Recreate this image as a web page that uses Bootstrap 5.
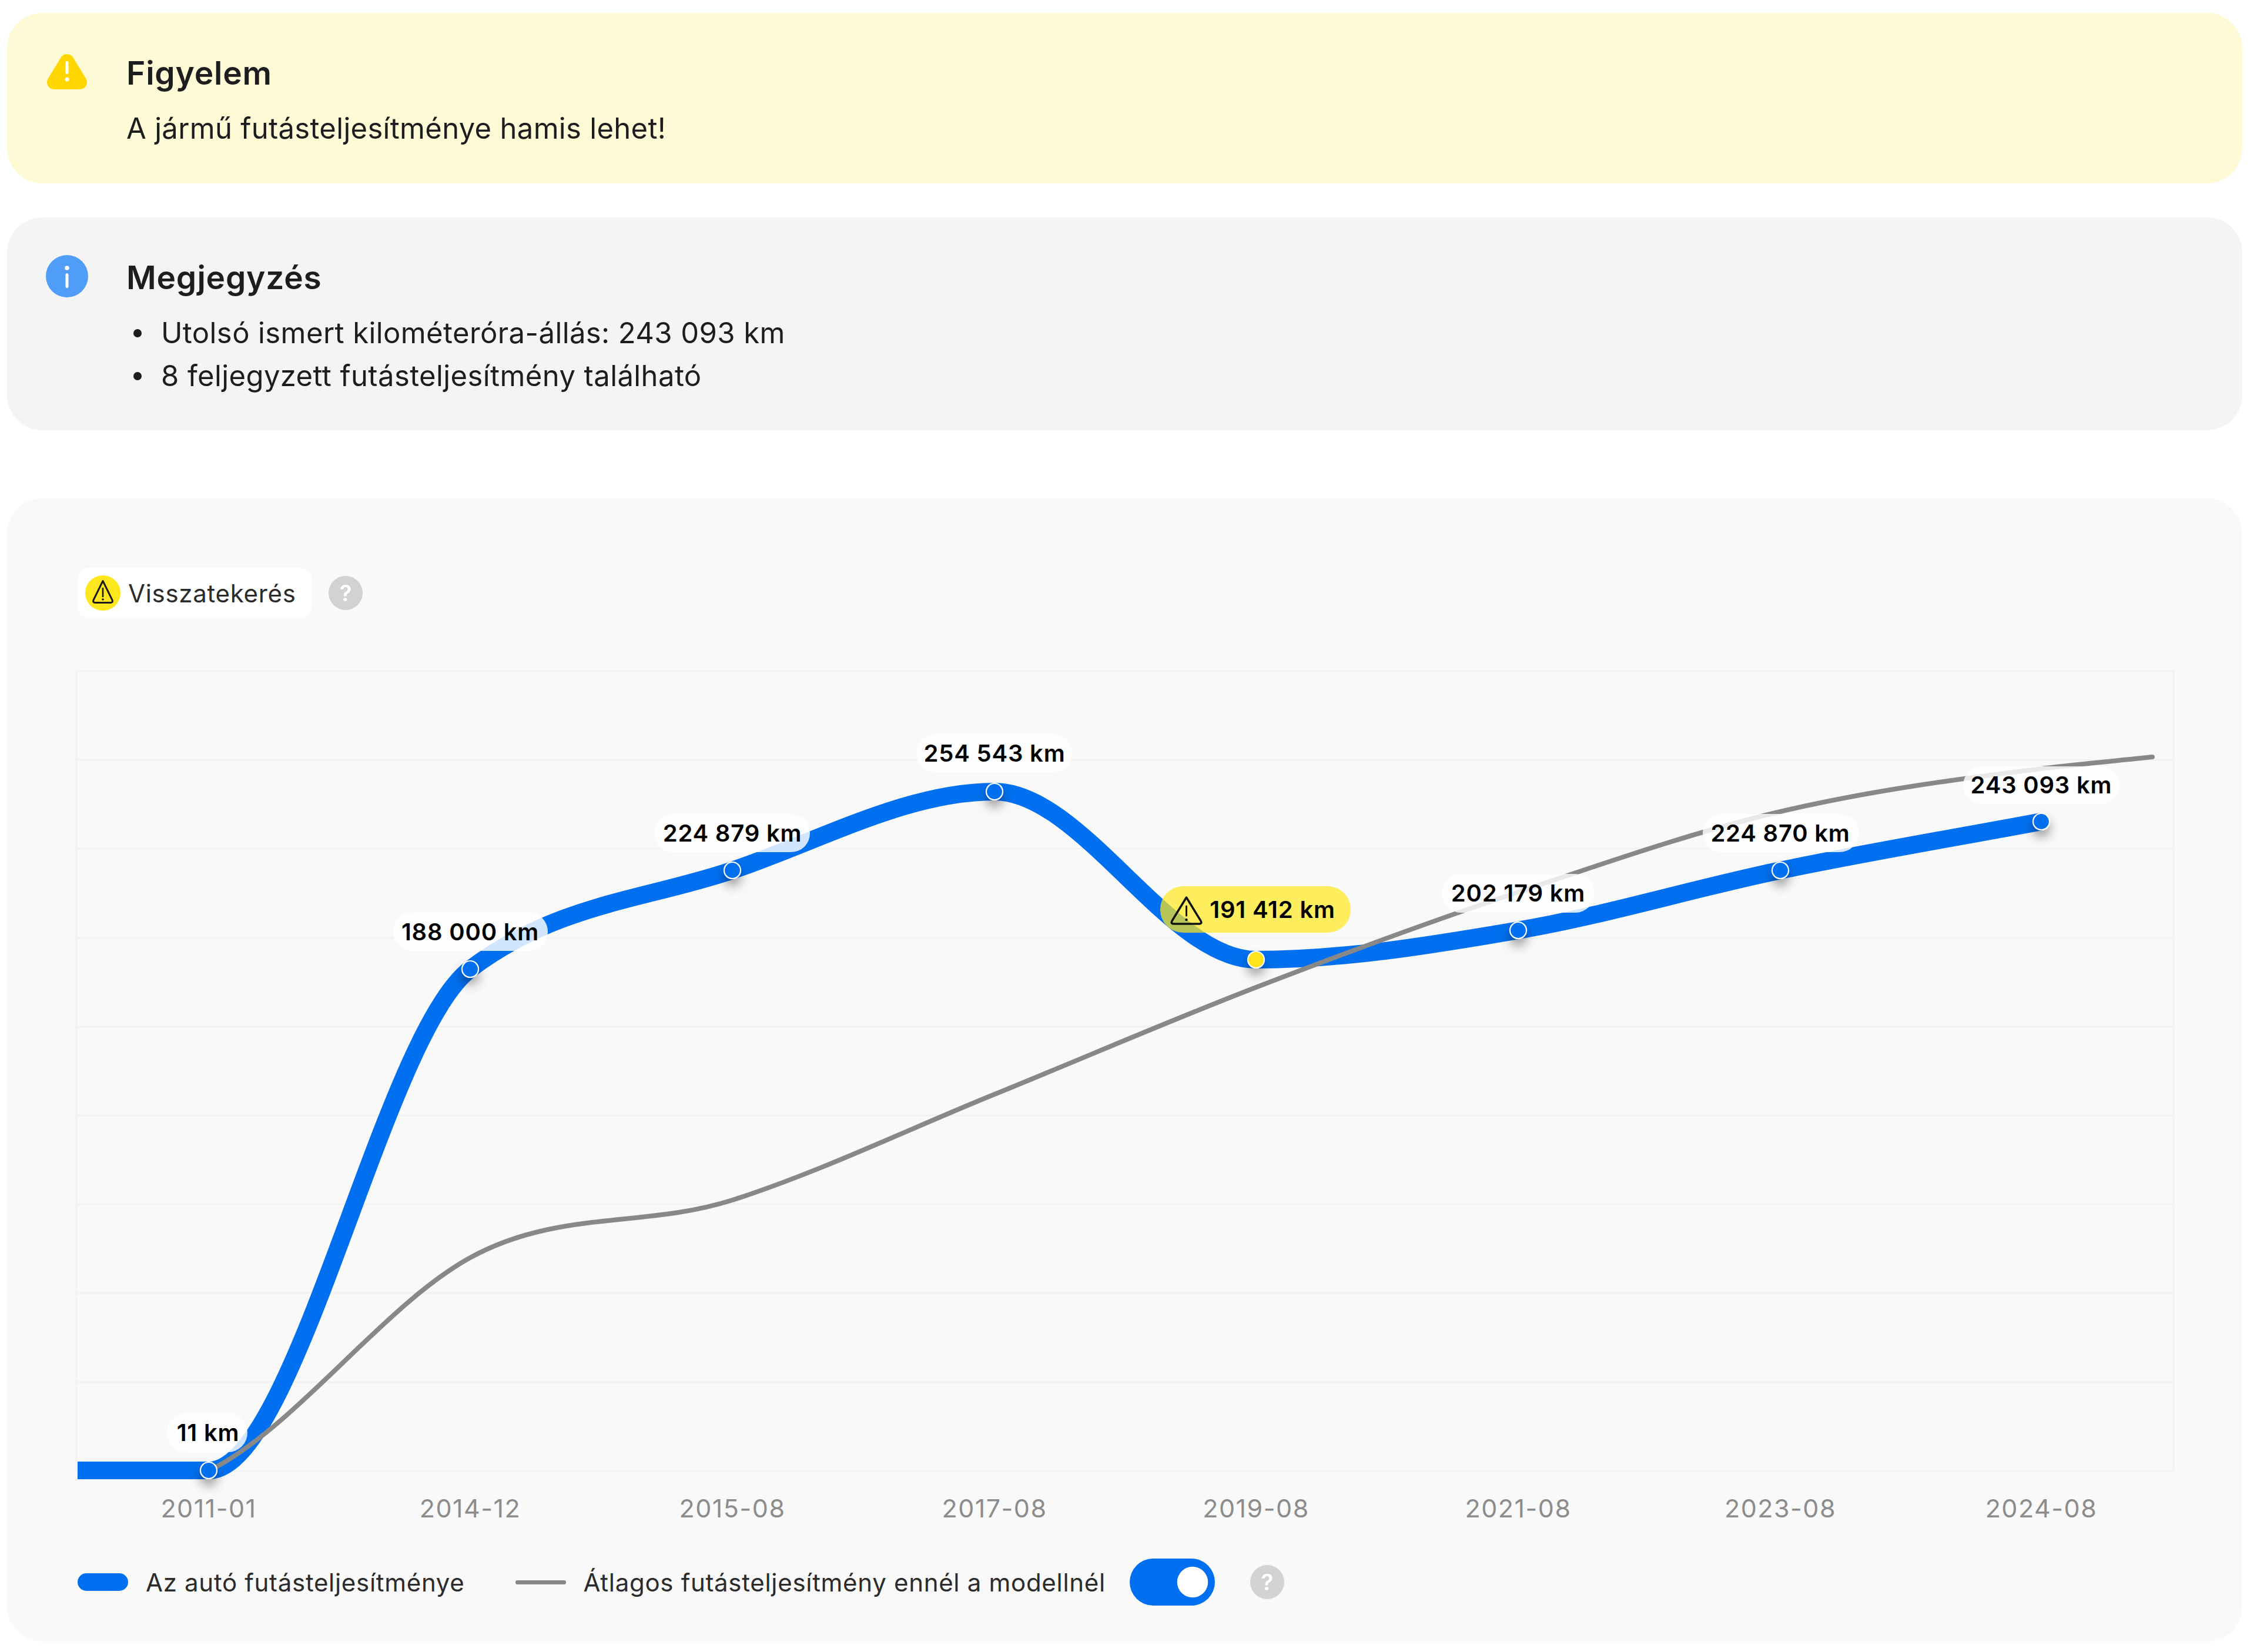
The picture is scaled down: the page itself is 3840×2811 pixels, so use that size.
<!DOCTYPE html>
<html lang="hu">
<head>
<meta charset="utf-8">
<title>Futásteljesítmény</title>
<link rel="stylesheet" href="https://cdn.jsdelivr.net/npm/bootstrap@5.3.0/dist/css/bootstrap.min.css">
<style>
body{background:#fff;color:#1d1d1f;font-family:"Inter","Liberation Sans",sans-serif;padding:22px 25px 0 12px;}
.notice{border-radius:60px;padding-left:68px;padding-top:66px;}
.notice-warn{background:#fffad6;height:290px;}
.notice-info{background:#f4f4f4;height:362px;margin-top:58px;}
.notice-icon{width:68px;height:72px;margin-right:67px;flex:none;display:block;overflow:visible;}
.notice-title{font-size:55px;font-weight:600;line-height:72px;margin:0 0 22px;letter-spacing:.8px;}
.notice-text{font-size:49px;line-height:73px;margin:0;letter-spacing:.3px;}
.notice-list{font-size:49px;line-height:73px;margin:0;padding-left:12px;letter-spacing:.4px;list-style:none;}
.notice-bullet{width:14px;height:14px;border-radius:50%;background:#1d1d1f;margin-right:33px;flex:none;}
.panel-box{background:#f9f9f9;border-radius:60px;margin-top:116px;height:1945px;padding-top:118px;}
.chip{background:#fff;border-radius:20px;height:86px;width:398px;padding-left:13px;font-size:42px;color:#2b2b2b;letter-spacing:.7px;}
.chip-icon{width:60px;height:60px;margin-right:13px;flex:none;}
.help-dot{background:#d2d2d2;color:#fff;border-radius:50%;width:58px;height:58px;font-size:38px;font-weight:600;line-height:58px;text-align:center;flex:none;letter-spacing:0;}
.chip-help{margin-left:29px;}
.top-row{padding-left:120px;}
.chart-svg{display:block;width:100%;height:1480px;margin-top:78px;}
.grid-line{stroke:#f2f2f2;stroke-width:3;fill:none;}
.line-car{stroke:#0070f0;stroke-width:30;fill:none;}
.line-avg{stroke:#888;stroke-width:8;fill:none;stroke-linecap:round;}
.dot{stroke:#fff;stroke-width:2.200;fill:#0070f0;}
.dot-warn{fill:#ffe31e;}
.pill{fill:#fff;fill-opacity:.82;}
.pill-warn{fill:#ffe71e;fill-opacity:.72;}
.km{font-family:"Inter","Liberation Sans",sans-serif;font-size:40px;font-weight:600;fill:#000;text-anchor:middle;letter-spacing:.8px;}
.axis{font-family:"Inter","Liberation Sans",sans-serif;font-size:43px;fill:#8c8c8c;text-anchor:middle;letter-spacing:1.5px;}
.legend-row{padding-left:120px;margin-top:42px;height:80px;font-size:42px;color:#2b2b2b;letter-spacing:.7px;}
.key-car{width:86px;height:30px;border-radius:15px;background:#0070f0;margin-right:30px;flex:none;}
.key-avg{width:86px;height:7px;border-radius:3px;background:#888;margin-left:87px;margin-right:29px;flex:none;}
.switch-wrap{margin:0 0 0 41px;padding:0;min-height:0;line-height:0;}
.form-switch .toggle-input{width:145px;height:80px;margin:0;border:0;background-color:#0070f0;background-size:auto 70px;float:none;box-shadow:none;}
.form-switch .toggle-input:checked{background-position:right 3px center;background-color:#0070f0;}
.legend-help{margin-left:60px;}
</style>
</head>
<body>
<div class="notice notice-warn d-flex">
  <svg class="notice-icon" viewBox="0 0 68 72" aria-hidden="true">
    <path d="M34 16 56 52H12Z" fill="#ffd600" stroke="#ffd600" stroke-width="24" stroke-linejoin="round"/>
    <rect x="31.500" y="16" width="5" height="22" rx="2.500" fill="#fff"/>
    <circle cx="34" cy="47" r="3.600" fill="#fff"/>
  </svg>
  <div>
    <h2 class="notice-title">Figyelem</h2>
    <p class="notice-text">A jármű futásteljesítménye hamis lehet!</p>
  </div>
</div>

<div class="notice notice-info d-flex">
  <svg class="notice-icon" viewBox="0 0 68 72" aria-hidden="true">
    <circle cx="34" cy="34" r="36" fill="#4f9cf9"/>
    <circle cx="34" cy="20" r="3.800" fill="#fff"/>
    <rect x="31.500" y="29" width="5" height="25" rx="2.500" fill="#fff"/>
  </svg>
  <div>
    <h2 class="notice-title">Megjegyzés</h2>
    <ul class="notice-list">
      <li class="d-flex align-items-center"><span class="notice-bullet"></span>Utolsó ismert kilométeróra-állás: 243 093 km</li>
      <li class="d-flex align-items-center"><span class="notice-bullet"></span>8 feljegyzett futásteljesítmény található</li>
    </ul>
  </div>
</div>

<div class="panel-box">
  <div class="top-row d-flex align-items-center">
    <div class="chip d-flex align-items-center">
      <svg class="chip-icon" viewBox="0 0 60 60" aria-hidden="true">
        <circle cx="30" cy="30" r="30" fill="#ffe71e"/>
        <path d="M30 9.500 L46 42 Q47.500 46.500 43 46.500 L17 46.500 Q12.500 46.500 14 42 Z" fill="none" stroke="#1a1a1a" stroke-width="3" stroke-linejoin="round"/>
        <path d="M30 22V36" stroke="#1a1a1a" stroke-width="2.600" stroke-linecap="round"/>
        <circle cx="30" cy="41" r="1.800" fill="#1a1a1a"/>
      </svg>
      <span>Visszatekerés</span>
    </div>
    <div class="help-dot chip-help">?</div>
  </div>

  <svg class="chart-svg" viewBox="12 1130 3803 1480" role="img" aria-label="Futásteljesítmény grafikon">
    <defs>
      <filter id="dotShadow" x="-150%" y="-150%" width="400%" height="400%">
        <feDropShadow dx="0" dy="11" stdDeviation="9" flood-color="#000" flood-opacity=".38"/>
      </filter>
      <clipPath id="plotClip"><rect x="132" y="1142" width="3568" height="1400"/></clipPath>
    </defs>
    <path class="grid-line" d="M130 1142H3698V2503H130ZM130 1293H3698M130 1444H3698M130 1596H3698M130 1747H3698M130 1898H3698M130 2049H3698M130 2200H3698M130 2352H3698"/>
    <path class="line-car" clip-path="url(#plotClip)" d="M100 2502H355C503.300 2502 651.700 1760.800 800 1649C948.700 1536.900 1097.300 1531.300 1246 1481C1394.700 1430.700 1543.300 1347 1692 1347C1840.300 1347 1988.700 1633 2137 1633C2285.700 1633 2434.300 1608.400 2583 1583C2731.700 1557.600 2880.300 1511.900 3029 1481C3177 1450.200 3325 1425.700 3473 1398"/>
    <path class="line-avg" d="M355 2503C503.300 2429 651.700 2221.600 800 2140C948.700 2058.200 1097.300 2089.600 1246 2042C1394.700 1994.400 1543.300 1922.400 1692 1862C1840.300 1801.800 1988.700 1737.200 2137 1680C2285.700 1622.600 2434.300 1567.800 2583 1518C2731.700 1468.200 2880.300 1415.900 3029 1381C3177 1346.200 3325 1326.200 3473 1308C3536 1300.300 3599 1294.700 3662 1288"/>
    <g filter="url(#dotShadow)">
      <circle class="dot" cx="355" cy="2502" r="14"/>
      <circle class="dot" cx="800" cy="1649" r="14"/>
      <circle class="dot" cx="1246" cy="1481" r="14"/>
      <circle class="dot" cx="1692" cy="1347" r="14"/>
      <circle class="dot dot-warn" cx="2137" cy="1633" r="14"/>
      <circle class="dot" cx="2583" cy="1583" r="14"/>
      <circle class="dot" cx="3029" cy="1481" r="14"/>
      <circle class="dot" cx="3473" cy="1398" r="14"/>
    </g>
    <rect class="pill" x="284" y="2405" width="137" height="66" rx="33"/>
    <text class="km" x="354" y="2452">11 km</text>
    <rect class="pill" x="669" y="1553" width="263" height="65" rx="32"/>
    <text class="km" x="800" y="1600">188 000 km</text>
    <rect class="pill" x="1113" y="1385" width="265" height="65" rx="32"/>
    <text class="km" x="1246" y="1432">224 879 km</text>
    <rect class="pill" x="1559" y="1249" width="265" height="65" rx="32"/>
    <text class="km" x="1692" y="1296">254 543 km</text>
    <rect class="pill-warn" x="1974" y="1508" width="324" height="79" rx="39"/>
    <path d="M2018.500 1527 L2043 1567 Q2045.500 1572 2040 1572 L1997 1572 Q1991.500 1572 1994 1567 Z" fill="none" stroke="#111" stroke-width="3.500" stroke-linejoin="round"/>
    <path d="M2018.500 1542V1558" stroke="#111" stroke-width="3" stroke-linecap="round"/>
    <circle cx="2018.500" cy="1565" r="2.200" fill="#111"/>
    <text class="km" x="2165" y="1562">191 412 km</text>
    <rect class="pill" x="2453" y="1487" width="260" height="66" rx="33"/>
    <text class="km" x="2583" y="1534">202 179 km</text>
    <rect class="pill" x="2897" y="1385" width="265" height="65" rx="32"/>
    <text class="km" x="3029" y="1432">224 870 km</text>
    <rect class="pill" x="3340" y="1304" width="266" height="64" rx="32"/>
    <text class="km" x="3473" y="1350">243 093 km</text>
    <text class="axis" x="355" y="2582">2011-01</text>
    <text class="axis" x="800" y="2582">2014-12</text>
    <text class="axis" x="1246" y="2582">2015-08</text>
    <text class="axis" x="1692" y="2582">2017-08</text>
    <text class="axis" x="2137" y="2582">2019-08</text>
    <text class="axis" x="2583" y="2582">2021-08</text>
    <text class="axis" x="3029" y="2582">2023-08</text>
    <text class="axis" x="3473" y="2582">2024-08</text>
  </svg>

  <div class="legend-row d-flex align-items-center">
    <span class="key-car"></span>
    <span>Az autó futásteljesítménye</span>
    <span class="key-avg"></span>
    <span>Átlagos futásteljesítmény ennél a modellnél</span>
    <div class="form-check form-switch switch-wrap">
      <input class="form-check-input toggle-input" type="checkbox" role="switch" checked aria-label="Átlag mutatása">
    </div>
    <div class="help-dot legend-help">?</div>
  </div>
</div>
<script src="https://cdn.jsdelivr.net/npm/bootstrap@5.3.0/dist/js/bootstrap.bundle.min.js"></script>
</body>
</html>
